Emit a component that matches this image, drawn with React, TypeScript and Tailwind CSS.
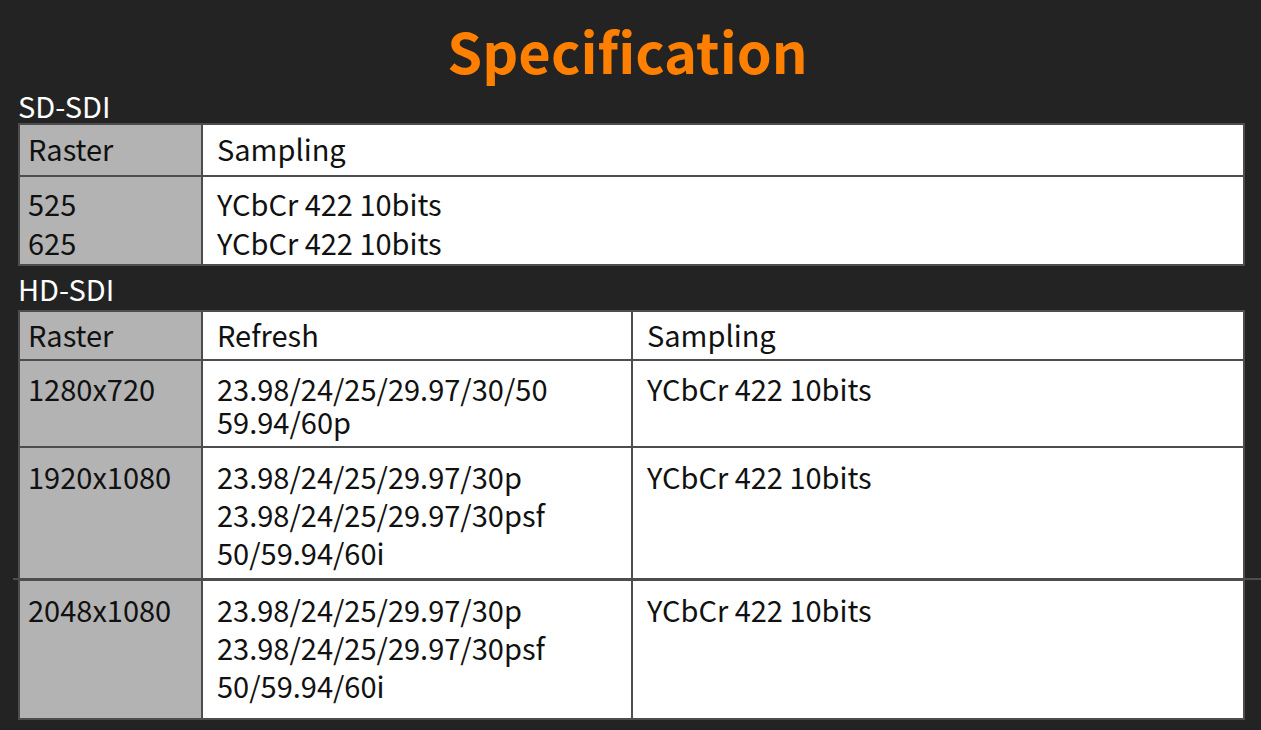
const font = { fontFamily: '"Noto Sans CJK SC", "Noto Sans", sans-serif' };

const cell = "border-2 border-[#4d4d4d] align-top";
const head = "border-2 border-[#4d4d4d] align-middle";

export default function App() {
  return (
    <div className="w-[1261px] h-[730px] bg-[#232323] text-[#111] overflow-hidden" style={font}>
      <h1 className="h-[88px] flex items-center justify-center text-[56px] font-bold text-[#ff7f00] leading-none pt-[12px] pr-[6px]">
        Specification
      </h1>

      <div className="h-[35px] pl-[18px] flex items-center text-[29px] text-white leading-none">SD-SDI</div>
      <table className="ml-[18px] w-[1227px] border-collapse text-[29px] table-fixed">
        <colgroup>
          <col className="w-[183px]" />
          <col />
        </colgroup>
        <tbody>
          <tr className="h-[52px]">
            <td className={`${head} bg-[#b3b3b3] pl-[8px] pb-[2px]`}>Raster</td>
            <td className={`${head} bg-white pl-[14px] pb-[2px]`}>Sampling</td>
          </tr>
          <tr className="h-[89px] leading-[39px]">
            <td className={`${cell} bg-[#b3b3b3] pl-[8px] pt-[7px]`}>
              525
              <br />
              625
            </td>
            <td className={`${cell} bg-white pl-[14px] pt-[7px]`}>
              YCbCr 422 10bits
              <br />
              YCbCr 422 10bits
            </td>
          </tr>
        </tbody>
      </table>

      <div className="h-[44px] pl-[18px] flex items-center text-[29px] text-white leading-none">HD-SDI</div>
      <div className="relative">
        <table className="ml-[18px] w-[1227px] border-collapse text-[29px] table-fixed">
          <colgroup>
            <col className="w-[183px]" />
            <col className="w-[430px]" />
            <col />
          </colgroup>
          <tbody>
            <tr className="h-[49px]">
              <td className={`${head} bg-[#b3b3b3] pl-[8px] pb-[2px]`}>Raster</td>
              <td className={`${head} bg-white pl-[14px] pb-[2px]`}>Refresh</td>
              <td className={`${head} bg-white pl-[14px] pb-[2px]`}>Sampling</td>
            </tr>
            <tr className="h-[87px] leading-[33px]">
              <td className={`${cell} bg-[#b3b3b3] pl-[8px] pt-[11px]`}>1280x720</td>
              <td className={`${cell} bg-white pl-[14px] pt-[11px]`}>
                23.98/24/25/29.97/30/50
                <br />
                59.94/60p
              </td>
              <td className={`${cell} bg-white pl-[14px] pt-[11px]`}>YCbCr 422 10bits</td>
            </tr>
            <tr className="h-[133px] leading-[38px]">
              <td className={`${cell} bg-[#b3b3b3] pl-[8px] pt-[9px]`}>1920x1080</td>
              <td className={`${cell} bg-white pl-[14px] pt-[9px]`}>
                23.98/24/25/29.97/30p
                <br />
                23.98/24/25/29.97/30psf
                <br />
                50/59.94/60i
              </td>
              <td className={`${cell} bg-white pl-[14px] pt-[9px]`}>YCbCr 422 10bits</td>
            </tr>
            <tr className="h-[139px] leading-[38px]">
              <td className={`${cell} bg-[#b3b3b3] pl-[8px] pt-[9px]`}>2048x1080</td>
              <td className={`${cell} bg-white pl-[14px] pt-[9px]`}>
                23.98/24/25/29.97/30p
                <br />
                23.98/24/25/29.97/30psf
                <br />
                50/59.94/60i
              </td>
              <td className={`${cell} bg-white pl-[14px] pt-[9px]`}>YCbCr 422 10bits</td>
            </tr>
          </tbody>
        </table>
        {/* stray rule that runs past the table edges */}
        <div className="absolute left-[13px] right-0 top-[268px] h-[2px] bg-[#4d4d4d]" />
      </div>
    </div>
  );
}
